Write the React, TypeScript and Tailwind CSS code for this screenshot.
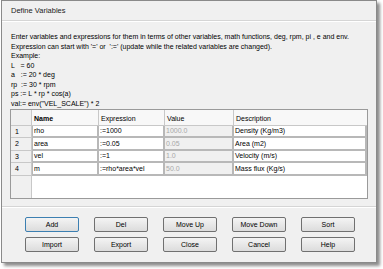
import React from "react";

const rows = [
  { n: "1", name: "rho", expr: ":=1000", val: "1000.0", desc: "Density (Kg/m3)", h: "h-[12px]" },
  { n: "2", name: "area", expr: ":=0.05", val: "0.05", desc: "Area (m2)", h: "h-[13px]" },
  { n: "3", name: "vel", expr: ":=1", val: "1.0", desc: "Velocity (m/s)", h: "h-[12px]" },
  { n: "4", name: "m", expr: ":=rho*area*vel", val: "50.0", desc: "Mass flux (Kg/s)", h: "h-[13px]" },
];

function Btn({ label, focused }: { label: string; focused?: boolean }) {
  return (
    <div
      className={
        "w-[54px] h-[15px] rounded-[2px] border flex items-center justify-center bg-gradient-to-b from-[#f4f4f4] to-[#dcdcdc] " +
        (focused ? "border-[#3c7fb1]" : "border-[#707070]")
      }
    >
      {label}
    </div>
  );
}

export default function App() {
  return (
    <div
      className="w-[383px] h-[269px] bg-white text-[7px] leading-[9.5px] text-black"
      style={{ fontFamily: "'Liberation Sans', Arial, sans-serif" }}
    >
      <div className="ml-[1px] w-[376px] h-[263px] border border-[#8a8a8a] bg-[#f0f0f0] shadow-[3px_3px_3px_rgba(0,0,0,0.45)] flex flex-col">
        <div className="h-[20px] px-[9px] flex items-center border-b border-[#d5d5d5] text-[#222] text-[7.5px]">Define Variables</div>
        <div className="h-[1px] bg-white" />
        <div className="px-[9px] pt-[10px] whitespace-pre">
          <div>Enter variables and expressions for them in terms of other variables, math functions, deg, rpm, pi , e and env.</div>
          <div>Expression can start with '=' or  ':=' (update while the related variables are changed).</div>
          <div>Example:</div>
          <div>L   = 60</div>
          <div>a   := 20 * deg</div>
          <div>rp  := 30 * rpm</div>
          <div>ps := L * rp * cos(a)</div>
          <div>val:= env("VEL_SCALE") * 2</div>
        </div>
        <div className="mx-[8px] mt-[1px] h-[90px] border border-[#9a9a9a] bg-white flex">
          <div className="w-[21px] bg-[#f0f0f0] border-r border-[#c8c8c8] flex flex-col">
            <div className="h-[16px] border-b border-[#c8c8c8]" />
            {rows.map((r) => (
              <div key={r.n} className={r.h + " border-b border-[#c8c8c8] pl-[4px] flex items-center"}>
                {r.n}
              </div>
            ))}
          </div>
          <div className="flex-1 flex flex-col">
            <div className="h-[16px] flex bg-[#f8f8f8] border-b border-[#c8c8c8]">
              <div className="w-[67px] border-r border-[#c8c8c8] pl-[2px] pt-[4px] font-bold">Name</div>
              <div className="w-[66px] border-r border-[#c8c8c8] pl-[2px] pt-[4px]">Expression</div>
              <div className="w-[69px] border-r border-[#c8c8c8] pl-[2px] pt-[4px]">Value</div>
              <div className="flex-1 pl-[2px] pt-[4px]">Description</div>
            </div>
            {rows.map((r) => (
              <div key={r.n} className={r.h + " flex border-b-2 border-[#b8b8b8]"}>
                <div className="w-[67px] border-r-2 border-l border-[#b8b8b8] bg-white pl-[1px] flex items-center">{r.name}</div>
                <div className="w-[66px] border-r-2 border-[#b8b8b8] bg-white pl-[1px] flex items-center">{r.expr}</div>
                <div className="w-[69px] border-r-2 border-[#b8b8b8] bg-[#f0f0f0] text-[#a8a8a8] pl-[1px] flex items-center">{r.val}</div>
                <div className="flex-1 border-r-2 border-[#b8b8b8] bg-white pl-[1px] flex items-center">{r.desc}</div>
              </div>
            ))}
          </div>
        </div>
        <div className="mt-[7px] h-[1px] bg-[#d5d5d5]" />
        <div className="h-[1px] bg-white" />
        <div className="pl-[23px] pt-[9px] grid grid-cols-[repeat(5,54px)] gap-x-[15px] gap-y-[5px]">
          <Btn label="Add" focused />
          <Btn label="Del" />
          <Btn label="Move Up" />
          <Btn label="Move Down" />
          <Btn label="Sort" />
          <Btn label="Import" />
          <Btn label="Export" />
          <Btn label="Close" />
          <Btn label="Cancel" />
          <Btn label="Help" />
        </div>
      </div>
    </div>
  );
}
